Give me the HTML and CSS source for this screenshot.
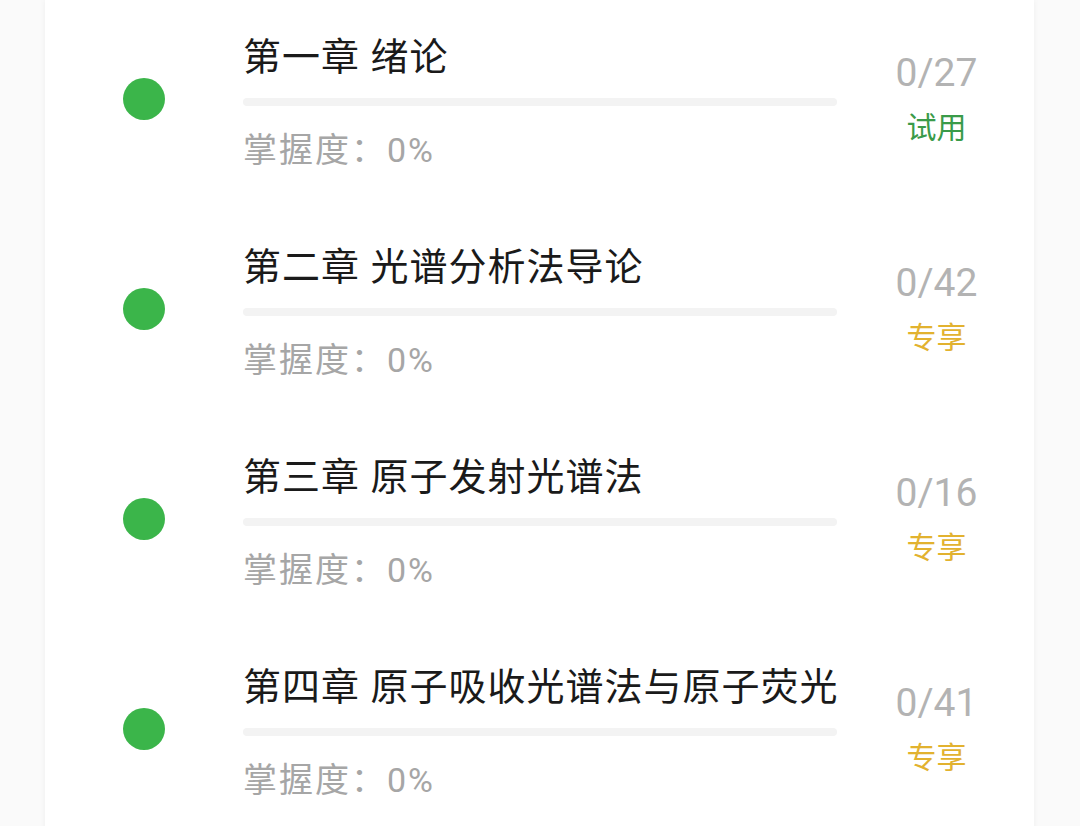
FILE: index.html
```html
<!DOCTYPE html>
<html lang="zh-CN">
<head>
    <meta charset="UTF-8">
    <meta name="viewport" content="width=device-width, initial-scale=1.0">
    <title>章节列表</title>
    <link rel="stylesheet" href="styles.css">
</head>
<body>
    <div class="chapter-card">
        <!-- 章节列表 -->
        <div class="chapter">
            <span class="dot"></span>
            <div class="chapter-main">
                <div class="chapter-title">第一章 绪论</div>
                <div class="progress"><div class="progress-fill" style="width: 0%"></div></div>
                <div class="mastery">掌握度：0%</div>
            </div>
            <div class="chapter-side">
                <div class="count">0/27</div>
                <div class="tag tag-trial">试用</div>
            </div>
        </div>
        <div class="chapter">
            <span class="dot"></span>
            <div class="chapter-main">
                <div class="chapter-title">第二章 光谱分析法导论</div>
                <div class="progress"><div class="progress-fill" style="width: 0%"></div></div>
                <div class="mastery">掌握度：0%</div>
            </div>
            <div class="chapter-side">
                <div class="count">0/42</div>
                <div class="tag tag-vip">专享</div>
            </div>
        </div>
        <div class="chapter">
            <span class="dot"></span>
            <div class="chapter-main">
                <div class="chapter-title">第三章 原子发射光谱法</div>
                <div class="progress"><div class="progress-fill" style="width: 0%"></div></div>
                <div class="mastery">掌握度：0%</div>
            </div>
            <div class="chapter-side">
                <div class="count">0/16</div>
                <div class="tag tag-vip">专享</div>
            </div>
        </div>
        <div class="chapter">
            <span class="dot"></span>
            <div class="chapter-main">
                <div class="chapter-title">第四章 原子吸收光谱法与原子荧光</div>
                <div class="progress"><div class="progress-fill" style="width: 0%"></div></div>
                <div class="mastery">掌握度：0%</div>
            </div>
            <div class="chapter-side">
                <div class="count">0/41</div>
                <div class="tag tag-vip">专享</div>
            </div>
        </div>
    </div>
</body>
</html>
```

FILE: styles.css
```css
/* General Reset */
* {
    margin: 0;
    padding: 0;
    box-sizing: border-box;
}

body {
    font-family: Roboto, "Noto Sans CJK SC", sans-serif;
    background-color: #fafafa;
    color: #1a1a1a;
    height: 826px;
    overflow: hidden;
}

.chapter-card {
    margin: 0 46px 0 45px;
    background-color: #fff;
    box-shadow: 0 0 6px rgba(0, 0, 0, 0.05);
    min-height: 826px;
}

.chapter {
    display: grid;
    grid-template-columns: 198px 594px 1fr;
    height: 210px;
    padding-top: 32px;
}

.dot {
    width: 42px;
    height: 42px;
    margin: 46px 0 0 78px;
    border-radius: 50%;
    background-color: #3bb54a;
}

.chapter-title {
    font-size: 38px;
    line-height: 50px;
    white-space: nowrap;
    letter-spacing: 1px;
}

.progress {
    margin-top: 16px;
    height: 8px;
    border-radius: 4px;
    background-color: #f3f3f3;
    overflow: hidden;
}

.progress-fill {
    height: 100%;
    background-color: #3bb54a;
}

.mastery {
    margin-top: 22px;
    font-size: 34px;
    line-height: 44px;
    letter-spacing: 2px;
    color: #a6a6a6;
}

.chapter-side {
    display: flex;
    flex-direction: column;
    align-items: center;
    padding-left: 2px;
}

.count {
    margin-top: 18px;
    font-size: 39px;
    line-height: 46px;
    color: #b3b3b3;
}

.tag {
    margin-top: 14px;
    font-size: 30px;
    line-height: 36px;
}

.tag-trial {
    color: #3a9b49;
}

.tag-vip {
    color: #e2b22f;
}
```
